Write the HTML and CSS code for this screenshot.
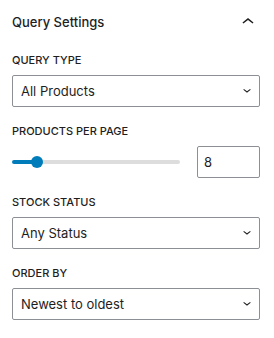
FILE: index.html
```html
<!DOCTYPE html>
<html lang="en">
<head>
  <meta charset="UTF-8">
  <title>Query Settings</title>
  <link rel="stylesheet" href="styles.css">
</head>
<body>
  <div class="panel">
    <div class="panel-header">
      <h2>Query Settings</h2>
      <button class="toggle" type="button" aria-expanded="true">
        <svg width="24" height="24" viewBox="0 0 24 24"><path d="M6.5 12.4L12 8l5.5 4.4-.9 1.2L12 10l-4.6 3.6-1-1.2z"/></svg>
      </button>
    </div>

    <!-- QUERY TYPE -->
    <div class="field">
      <label for="queryType">Query Type</label>
      <div class="select-wrap">
        <select id="queryType">
          <option>All Products</option>
          <option>Sale Products</option>
        </select>
        <svg class="select-icon" width="16" height="16" viewBox="0 0 24 24"><path d="M17.5 11.6L12 16l-5.5-4.4.9-1.2L12 14l4.6-3.6 1 1.2z"/></svg>
      </div>
    </div>

    <!-- PRODUCTS PER PAGE -->
    <div class="field">
      <label for="perPage">Products per page</label>
      <div class="range-row">
        <input type="range" id="perPage" min="1" max="60" value="8" class="range" style="--fill: 15.5%">
        <input type="number" id="perPageNum" value="8" class="number">
      </div>
    </div>

    <!-- STOCK STATUS -->
    <div class="field">
      <label for="stockStatus">Stock Status</label>
      <div class="select-wrap">
        <select id="stockStatus">
          <option>Any Status</option>
          <option>In stock</option>
        </select>
        <svg class="select-icon" width="16" height="16" viewBox="0 0 24 24"><path d="M17.5 11.6L12 16l-5.5-4.4.9-1.2L12 14l4.6-3.6 1 1.2z"/></svg>
      </div>
    </div>

    <!-- ORDER BY -->
    <div class="field">
      <label for="orderBy">Order By</label>
      <div class="select-wrap">
        <select id="orderBy">
          <option>Newest to oldest</option>
          <option>Oldest to newest</option>
        </select>
        <svg class="select-icon" width="16" height="16" viewBox="0 0 24 24"><path d="M17.5 11.6L12 16l-5.5-4.4.9-1.2L12 14l4.6-3.6 1 1.2z"/></svg>
      </div>
    </div>
  </div>
</body>
</html>
```

FILE: styles.css
```css
* {
  margin: 0;
  padding: 0;
  box-sizing: border-box;
}

body {
  font-family: Inter, "Noto Sans", sans-serif;
  background-color: white;
  color: #1e1e1e;
}

.panel {
  padding: 10px 14px 0 12px;
}

.panel-header {
  display: flex;
  justify-content: space-between;
  align-items: center;
  height: 24px;
  margin-bottom: 18px;
}

.panel-header h2 {
  font-size: 13px;
  font-weight: 500;
  line-height: 20px;
}

.toggle {
  display: flex;
  border: none;
  background: none;
  cursor: pointer;
}

.toggle svg {
  fill: #1e1e1e;
}

.field {
  margin-bottom: 16px;
}

label {
  display: block;
  height: 16px;
  font-size: 11px;
  font-weight: 500;
  line-height: 16px;
  text-transform: uppercase;
  margin-bottom: 7px;
}

.select-wrap {
  position: relative;
  height: 32px;
}

select {
  display: block;
  width: 100%;
  height: 32px;
  padding: 0 24px 0 8px;
  font-family: inherit;
  font-size: 13px;
  color: #1e1e1e;
  background-color: white;
  border: 1px solid #8c8f94;
  border-radius: 2px;
  appearance: none;
  outline: none;
}

.select-icon {
  position: absolute;
  right: 5px;
  top: 7px;
  fill: #1e1e1e;
  pointer-events: none;
}

.range-row {
  display: flex;
  align-items: center;
  gap: 17px;
  height: 32px;
}

.range {
  display: block;
  flex: 1;
  min-width: 0;
  height: 12px;
  background: none;
  appearance: none;
  outline: none;
}

.range::-webkit-slider-runnable-track {
  height: 4px;
  border-radius: 2px;
  background: linear-gradient(to right, #007cba var(--fill), #dddddd var(--fill));
}

.range::-webkit-slider-thumb {
  appearance: none;
  width: 12px;
  height: 12px;
  margin-top: -4px;
  border-radius: 50%;
  background-color: #007cba;
  border: none;
}

.number {
  display: block;
  width: 63px;
  height: 32px;
  padding: 0 6px;
  font-family: inherit;
  font-size: 13px;
  color: #1e1e1e;
  border: 1px solid #8c8f94;
  border-radius: 2px;
  outline: none;
  appearance: textfield;
}

.number::-webkit-inner-spin-button,
.number::-webkit-outer-spin-button {
  appearance: none;
  margin: 0;
}
```
